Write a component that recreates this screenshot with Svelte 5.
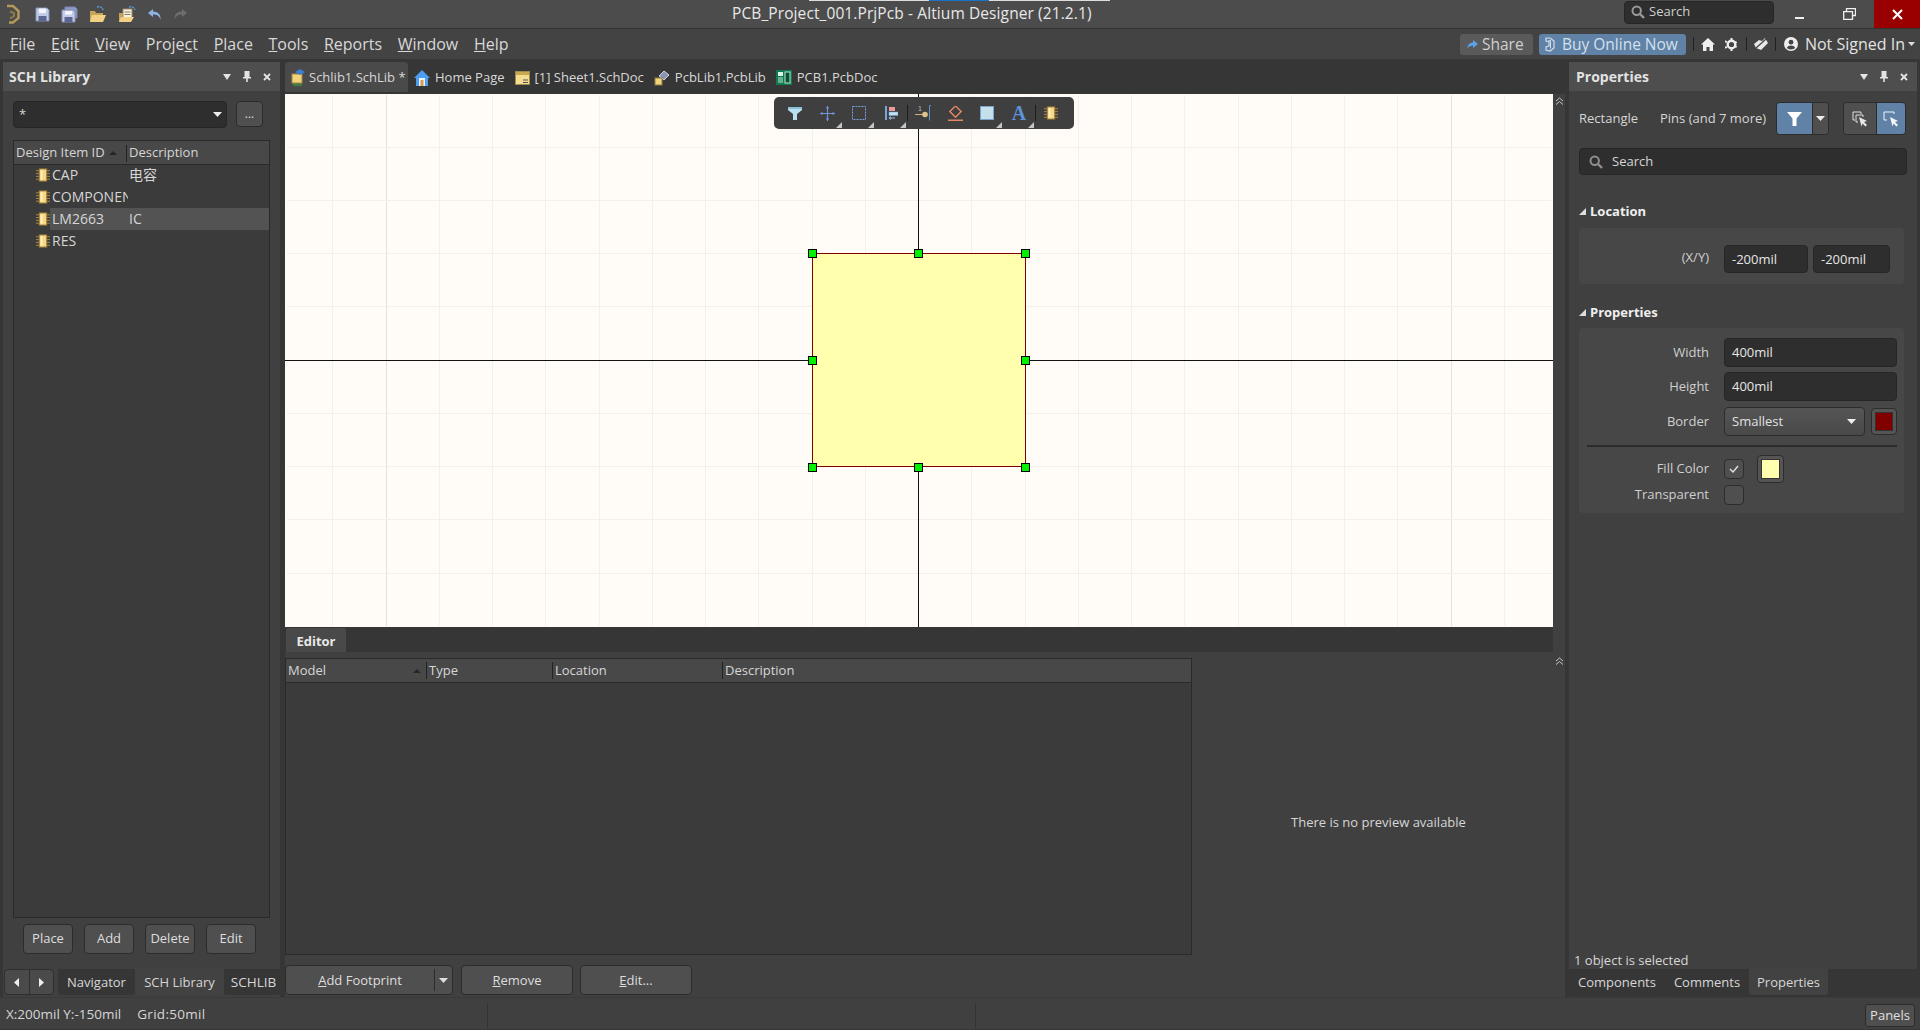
<script>
  const menu = [['','F','ile'],['','E','dit'],['','V','iew'],['Proje','c','t'],['','P','lace'],['','T','ools'],['','R','eports'],['','W','indow'],['','H','elp']];
  const rows = [['CAP','电容',false],['COMPONENT_1','',false],['LM2663','IC',true],['RES','',false]];
  const gx = []; for (let k=-11;k<=11;k++){ if(k!==0) gx.push({x:Math.floor(918.5+53.25*k)+0.5,major:Math.abs(k)===10}); }
  const gy = []; for (let k=-4;k<=4;k++){ if(k!==0) gy.push(Math.floor(360+53.25*k)+0.5); }
  const handles = [[812,253],[918,253],[1025,253],[812,360],[1025,360],[812,467],[918,467],[1025,467]];
</script>

{#snippet chip(s=15)}
  <svg class="ico" width={s} height={s} viewBox="0 0 15 15"><path d="M0 3h15M0 6h15M0 9h15M0 12h15" stroke="#b08d3c" stroke-width="1"/><rect x="3.5" y="1" width="8" height="13" fill="#f8d686" stroke="#9a7a33"/><rect x="5" y="2.5" width="2" height="10" fill="#fdf0c4"/></svg>
{/snippet}
{#snippet mag(s=14,c='#9a9a9a')}
  <svg class="ico" width={s} height={s} viewBox="0 0 14 14"><circle cx="5.7" cy="5.7" r="4.2" fill="none" stroke={c} stroke-width="2"/><path d="M9 9l4 4" stroke={c} stroke-width="2.4"/></svg>
{/snippet}
{#snippet caret(c='#e6e6e6',w=9)}
  <svg class="ico" width={w} height={w*5/9} viewBox="0 0 9 5"><path d="M0 0h9L4.500 5z" fill={c}/></svg>
{/snippet}
{#snippet panelhead(title)}
  <div class="phead">
    <span class="ptitle">{title}</span>
    <span class="pctl">
      <svg class="ico" width="8" height="6" viewBox="0 0 8 6"><path d="M0 0h8L4 6z" fill="#e4e4e4"/></svg>
      <svg class="ico" width="8" height="11" viewBox="0 0 8 11"><path d="M1.500 0h5v6H8v1.500H4.800V11H3.200V7.500H0V6h1.500z" fill="#e4e4e4"/></svg>
      <svg class="ico" width="8" height="8" viewBox="0 0 8 8"><path d="M1 1l6 6M7 1L1 7" stroke="#e4e4e4" stroke-width="1.800"/></svg>
    </span>
  </div>
{/snippet}

<div class="topline"><i class="a"></i><i class="b"></i><i class="a2"></i></div>
<div class="app">
  <header class="titlebar">
    <div class="qa">
      <svg class="logo" width="14" height="20" viewBox="0 0 14 20"><path d="M1 2h6l5.500 5v7L7 18.500H3" fill="none" stroke="#b5995a" stroke-width="2.400"/><path d="M4 7.500l4 1.500v3l-4 2.500" fill="none" stroke="#8f7a48" stroke-width="2"/></svg>
      <svg class="q" width="15" height="15" viewBox="0 0 15 15"><path d="M1 1h11l2 2v11H1z" fill="#c2cbe8" stroke="#8490bc"/><rect x="4" y="1.500" width="7" height="4.500" fill="#f3f5fb"/><rect x="3.500" y="9" width="8" height="5" fill="#5d6690"/></svg>
      <svg class="q" width="17" height="17" viewBox="0 0 17 17"><path d="M4 1h10l2 2v9H4z" fill="#8e99c4" stroke="#7a86b4"/><path d="M1 4h11l2 2v10H1z" fill="#c2cbe8" stroke="#8490bc"/><rect x="4" y="5" width="7" height="3.500" fill="#f3f5fb"/><rect x="3.500" y="11" width="8" height="5" fill="#5d6690"/></svg>
      <svg class="q" width="18" height="17" viewBox="0 0 18 17"><path d="M1 5h5l1 2h7v9H1z" fill="#c8a458"/><path d="M3 9h14l-3 7H1z" fill="#f2d184"/><path d="M8 1c3-1 5 0 6 3" stroke="#5b9bd5" fill="none" stroke-width="1.400" stroke-dasharray="2 1"/></svg>
      <svg class="q" width="18" height="17" viewBox="0 0 18 17"><path d="M1 7h4l1 1h7v8H1z" fill="#c8a458"/><rect x="5" y="3" width="9" height="9" fill="#f7f3e6" stroke="#9a8a60"/><path d="M6.500 6h6M6.500 8.500h6" stroke="#8a7a50"/><path d="M3 11h13l-3 5H1z" fill="#f2d184"/><path d="M11 1c3-.5 5 0 6 3" stroke="#5b9bd5" fill="none" stroke-width="1.400" stroke-dasharray="2 1"/></svg>
      <svg class="q" width="15" height="13" viewBox="0 0 15 13"><path d="M6 1L1 5l5 4V6.500c4 0 6 1 7.500 5 .5-5-2.500-8-7.500-8z" fill="#8fb2e0"/></svg>
      <svg class="q" width="15" height="13" viewBox="0 0 15 13"><path d="M9 1l5 4-5 4V6.500c-4 0-6 1-7.500 5C1 6.500 4 3.500 9 3.500z" fill="#6e6e6e"/></svg>
    </div>
    <div class="title">PCB_Project_001.PrjPcb - Altium Designer (21.2.1)</div>
    <div class="grow"></div>
    <div class="tsearch">{@render mag(14)}<span>Search</span></div>
    <div class="win">
      <span class="wb"><svg width="9" height="9" viewBox="0 0 9 9"><rect y="7" width="9" height="2" fill="#f0f0f0"/></svg></span>
      <span class="wb"><svg width="13" height="12" viewBox="0 0 13 12"><path d="M3.500 3V.7h9v6.800h-3M.7 3.700h8.800v7.600H.7z" fill="none" stroke="#f0f0f0" stroke-width="1.300"/></svg></span>
      <span class="wb close"><svg width="11" height="11" viewBox="0 0 11 11"><path d="M1 1l9 9M10 1l-9 9" stroke="#fff" stroke-width="2"/></svg></span>
    </div>
  </header>

  <nav class="menubar">
    {#each menu as m}<span class="mi">{m[0]}<u>{m[1]}</u>{m[2]}</span>{/each}
    <div class="grow"></div>
    <span class="share"><svg class="ico" width="11" height="9" viewBox="0 0 11 9"><path d="M6 0l5 4-5 4V5.500C3.500 5.500 1.500 6.500 0 8.500 .5 5 2.500 2.800 6 2.500z" fill="#5ea3e6"/></svg>Share</span>
    <span class="buy"><svg class="ico" width="10" height="15" viewBox="0 0 10 15"><path d="M1 1h4l4 3v7l-4 3-4-1V10l3-1V5L1 4z" fill="none" stroke="#d4dfeb" stroke-width="1.200"/><path d="M3.500 3.500h2v8" fill="none" stroke="#d4dfeb"/></svg>Buy Online Now</span>
    <i class="vd first"></i>
    <svg class="ico home" width="14" height="13" viewBox="0 0 14 13"><path d="M7 0l7 6.500h-2V13H8.500V9h-3v4H2V6.500H0z" fill="#eee"/></svg>
    <svg class="ico gear" width="13" height="13" viewBox="0 0 13 13"><circle cx="6.500" cy="6.500" r="3.800" fill="none" stroke="#eee" stroke-width="2.400"/><path d="M6.500 0v13M0 3.200l13 6.600M0 9.800l13-6.600" stroke="#eee" stroke-width="2" stroke-dasharray="2 9"/></svg>
    <i class="vd"></i>
    <svg class="ico hand" width="14" height="12" viewBox="0 0 14 12"><path d="M0 6l5-4 3 1 3-3 3 5-7 7-5-2z" fill="#e8e8e8"/><path d="M2 10L12 1" stroke="#434343" stroke-width="1.200"/></svg>
    <i class="vd"></i>
    <svg class="ico user" width="14" height="14" viewBox="0 0 14 14"><circle cx="7" cy="7" r="7" fill="#eee"/><circle cx="7" cy="5.200" r="2.400" fill="#434343"/><path d="M2.800 11c1-2 2.500-2.600 4.200-2.600S10.200 9 11.200 11c-2.200 1.900-6.200 1.900-8.400 0z" fill="#434343"/></svg>
    <span class="signed">Not Signed In</span>{@render caret('#ddd',7)}
    <span class="endgap"></span>
  </nav>

  <main class="work">
    <section class="panel left">
      {@render panelhead('SCH Library')}
      <div class="filter">
        <div class="combo"><span>*</span>{@render caret('#eee')}</div>
        <button class="btn dots">...</button>
      </div>
      <div class="libtable">
        <div class="thead">
          <span class="c1">Design Item ID<svg class="sort" width="8" height="4" viewBox="0 0 8 4"><path d="M4 0l4 4H0z" fill="#262626"/></svg></span>
          <span class="c2">Description</span>
        </div>
        {#each rows as r}
          <div class="trow">
            <span class="chipcell">{@render chip(14)}</span>
            <span class="rowbody" class:sel={r[2]}><span class="name">{r[0]}</span><span class="desc">{r[1]}</span></span>
          </div>
        {/each}
      </div>
      <div class="btnrow">
        <button class="btn lb">Place</button><button class="btn lb">Add</button><button class="btn lb">Delete</button><button class="btn lb">Edit</button>
      </div>
      <div class="ltabs">
        <div class="arrows">
          <span><svg width="5" height="9" viewBox="0 0 5 9"><path d="M5 0v9L0 4.500z" fill="#eee"/></svg></span>
          <span><svg width="5" height="9" viewBox="0 0 5 9"><path d="M0 0v9l5-4.500z" fill="#eee"/></svg></span>
        </div>
        <span class="ltab nav">Navigator</span><span class="ltab on sl">SCH Library</span><span class="ltab sc">SCHLIB</span>
      </div>
    </section>

    <section class="center">
      <div class="doctabs">
        <span class="dt active">
          <svg class="ico" width="15" height="17" viewBox="0 0 15 17"><path d="M3 14h9v3H3z" fill="#3e7d3e"/><rect x="2" y="5" width="10" height="9" fill="#f3d27c" stroke="#a08a40"/><path d="M5 3l5-3 5 3-5 3z" fill="#3b7fd4"/></svg>
          Schlib1.SchLib *
        </span>
        <span class="dt"><svg class="ico" width="16" height="16" viewBox="0 0 16 16"><path d="M8 0l8 8h-2v8H2V8H0z" fill="#4d9df0"/><path d="M5 8h6v8H5z" fill="#eaf3fd"/><path d="M6.500 10h3v6h-3z" fill="#d89c4a"/></svg>Home Page</span>
        <span class="dt"><svg class="ico" width="15" height="14" viewBox="0 0 15 14"><rect x=".5" y=".5" width="14" height="13" fill="#f5dc90" stroke="#a08a50"/><rect x="1" y="1" width="13" height="3" fill="#c9a94f"/><path d="M8 9h5M8 11.500h5" stroke="#555"/></svg>[1] Sheet1.SchDoc</span>
        <span class="dt"><svg class="ico" width="16" height="16" viewBox="0 0 16 16"><path d="M5 6l5-5 5 4-5 5z" fill="#8a94b0" stroke="#cfd5e3"/><rect x="1" y="8" width="7" height="7" fill="#f3d27c" stroke="#8a7a40"/></svg>PcbLib1.PcbLib</span>
        <span class="dt"><svg class="ico" width="16" height="15" viewBox="0 0 16 15"><rect width="16" height="15" fill="#0f7a52"/><rect x="2" y="2" width="5" height="4" fill="#dff3e4"/><rect x="9" y="2" width="5" height="11" fill="#0a4f36" stroke="#bde5cc"/><path d="M2 8h5M2 10h5M2 12h5" stroke="#bde5cc"/></svg>PCB1.PcbDoc</span>
      </div>

      <div class="canvasrow">
        <div class="canvas">
          <svg class="sheet" width="1268" height="533" viewBox="285 94 1268 533">
            {#each gx as g}<line x1={g.x} x2={g.x} y1="95" y2="626" stroke={g.major?'#e2e1dc':'#f1f0eb'} stroke-width="1"/>{/each}
            {#each gy as y}<line x1="287" x2="1551" y1={y} y2={y} stroke="#f1f0eb" stroke-width="1"/>{/each}
            <line x1="918.5" x2="918.5" y1="94" y2="627" stroke="#111"/>
            <line x1="285" x2="1553" y1="360.500" y2="360.500" stroke="#111"/>
            <rect x="812.500" y="253.500" width="213" height="213" fill="#ffffae" stroke="#800000"/>
            {#each handles as h}<rect x={h[0]-3.5} y={h[1]-3.5} width="8" height="8" fill="#00f000" stroke="#000"/>{/each}
          </svg>
          <div class="toolbar">
            <span class="tc"><svg width="14" height="13" viewBox="0 0 14 13"><path d="M0 0h14v3L9 7v6H5V7L0 3z" fill="#b9e0ee"/><path d="M0 0h14v2H0z" fill="#8cc0d6"/></svg></span>
            <span class="tc more"><svg width="15" height="15" viewBox="0 0 15 15"><path d="M7.500 0v15M0 7.500h15" stroke="#6f93d6" stroke-width="1.200"/><path d="M6 2h3M6 13h3M2 6v3M13 6v3" stroke="#6f93d6"/></svg></span>
            <span class="tc more"><svg width="14" height="14" viewBox="0 0 14 14"><rect x=".5" y=".5" width="13" height="13" fill="none" stroke="#7d9ee0" stroke-dasharray="2 1"/></svg></span>
            <span class="tc more"><svg width="13" height="14" viewBox="0 0 13 14"><rect width="2" height="14" fill="#7aa6dc"/><rect x="4" y="1" width="6" height="4" fill="#ef9a9a"/><rect x="4" y="6" width="9" height="3.500" fill="#bfe3f2" stroke="#6fa3d0" stroke-width=".5"/><path d="M4 12h6M4 12l2-1.500M4 12l2 1.500" stroke="#9ec1e8"/></svg></span>
            <span class="tc sepl"><svg width="16" height="16" viewBox="0 0 16 16"><text x="3" y="6" class="pn">1</text><path d="M0 9.500h8" stroke="#cbb37a"/><circle cx="10" cy="9.500" r="2.800" fill="#dcc48c"/><path d="M16 .5h-1.500v15" fill="none" stroke="#5d8fd0"/></svg></span>
            <span class="tc"><svg width="15" height="15" viewBox="0 0 15 15"><rect x="3.500" y="1.500" width="8" height="8" transform="rotate(45 7.500 5.500)" fill="none" stroke="#e58a68" stroke-width="1.400"/><rect y="13.500" width="15" height="1.500" fill="#e58a68"/></svg></span>
            <span class="tc more"><svg width="14" height="14" viewBox="0 0 14 14"><rect x=".5" y=".5" width="13" height="13" fill="#c4e0ec" stroke="#7ba3cc"/></svg></span>
            <span class="tc more big">A</span>
            <span class="tc sepl">{@render chip(14)}</span>
          </div>
        </div>
        <div class="strip"><svg width="9" height="8" viewBox="0 0 9 8"><path d="M1 4l3.500-3L8 4M1 7.500l3.500-3 3.500 3" fill="none" stroke="#c9c9c9"/></svg></div>
      </div>

      <div class="editorband">
        <div class="bandfill"><span class="edtab">Editor</span></div>
        <div class="strip"></div>
      </div>

      <div class="editorbody">
        <div class="edleft">
          <div class="edtable">
            <div class="ehead">
              <span class="e1">Model<svg class="sort" width="8" height="4" viewBox="0 0 8 4"><path d="M4 0l4 4H0z" fill="#262626"/></svg></span>
              <span class="e2">Type</span><span class="e3">Location</span><span class="e4">Description</span>
            </div>
          </div>
          <div class="edbtns">
            <div class="btn addfp"><span class="lbl"><u>A</u>dd Footprint</span><span class="drop">{@render caret('#ddd')}</span></div>
            <button class="btn eb remove"><u>R</u>emove</button>
            <button class="btn eb"><u>E</u>dit...</button>
          </div>
        </div>
        <div class="preview">There is no preview available</div>
        <div class="strip2"><svg width="9" height="8" viewBox="0 0 9 8"><path d="M1 4l3.500-3L8 4M1 7.500l3.500-3 3.500 3" fill="none" stroke="#c9c9c9"/></svg></div>
      </div>
    </section>

    <section class="panel right">
      {@render panelhead('Properties')}
      <div class="pbody">
        <div class="selrow">
          <span class="rect">Rectangle</span><span class="pins">Pins (and 7 more)</span>
          <div class="fgroup">
            <span class="fb blue"><svg width="15" height="14" viewBox="0 0 15 14"><path d="M0 0h15L9.500 6.500V14h-4V6.500z" fill="#fff"/></svg></span>
            <span class="fb dd">{@render caret('#eee')}</span>
          </div>
          <div class="fgroup two">
            <span class="fb g"><svg width="16" height="16" viewBox="0 0 16 16"><path d="M1 1h8v2M1 1v8h2M4 4h7v2M4 4v7h2" fill="none" stroke="#e0e0e0"/><path d="M7 6l8 4-3 1 3 3-1.500 1.500-3-3-1 3z" fill="#e8e8e8"/></svg></span>
            <span class="fb blue g"><svg width="16" height="16" viewBox="0 0 16 16"><path d="M1 9V1h10v2M1 9h3" fill="none" stroke="#f2f6fb"/><path d="M7 6l8 4-3 1 3 3-1.500 1.500-3-3-1 3z" fill="#f2f6fb"/></svg></span>
          </div>
        </div>
        <div class="psearch">{@render mag(14,'#8f8f8f')}<span>Search</span></div>

        <h3 class="sec first"><svg width="7" height="7" viewBox="0 0 7 7"><path d="M7 0v7H0z" fill="#ddd"/></svg>Location</h3>
        <div class="box loc">
          <span class="lab xy">(X/Y)</span><span class="inp x">-200mil</span><span class="inp y">-200mil</span>
        </div>

        <h3 class="sec"><svg width="7" height="7" viewBox="0 0 7 7"><path d="M7 0v7H0z" fill="#ddd"/></svg>Properties</h3>
        <div class="box props">
          <div class="frow"><span class="lab">Width</span><span class="inp wide">400mil</span></div>
          <div class="frow"><span class="lab">Height</span><span class="inp wide">400mil</span></div>
          <div class="frow bd"><span class="lab">Border</span><span class="sel2"><span>Smallest</span>{@render caret('#f0f0f0')}</span><span class="sw red"><i></i></span></div>
          <div class="hr"></div>
          <div class="frow fill"><span class="lab">Fill Color</span><span class="chk"><svg width="10" height="8" viewBox="0 0 10 8"><path d="M1 4l3 3 5-6" fill="none" stroke="#e6e6e6" stroke-width="1.300"/></svg></span><span class="sw yel"><i></i></span></div>
          <div class="frow trans"><span class="lab">Transparent</span><span class="chk"></span></div>
        </div>

        <div class="grow"></div>
        <div class="selinfo">1 object is selected</div>
      </div>
      <div class="rtabs"><span class="rt c">Components</span><span class="rt m">Comments</span><span class="rt on p">Properties</span></div>
    </section>
  </main>

  <footer class="status">
    <span class="coord">X:200mil Y:-150mil</span><span class="gridt">Grid:50mil</span>
    <i class="sd one"></i><i class="sd two"></i>
    <div class="grow"></div>
    <span class="panelsbtn">Panels</span>
  </footer>
</div>

<style>
  :global(body){margin:0;background:#363636;}
  .app{position:relative;width:1920px;height:1030px;display:flex;flex-direction:column;overflow:hidden;background:#363636;color:#d6d6d6;font:13px/1.2 "Open Sans","Noto Sans CJK SC",sans-serif;}
  .topline{position:absolute;left:809px;top:0;width:301px;height:1px;z-index:3;display:flex;}
  .topline i{display:block;height:1px;}
  .topline .a{width:120px;background:#ddd}.topline .b{width:60px;background:#1a73c8}.topline .a2{width:121px;background:#ddd}
  .grow{flex:1;}
  .ico{display:block;flex:none;}
  button{font:inherit;color:inherit;padding:0;}
  .titlebar{height:28px;flex:none;display:flex;align-items:center;background:#4c4c4c;border-bottom:1px solid #333;}
  .qa{width:732px;height:28px;display:flex;align-items:center;flex:none;position:relative;}
  .logo{margin-left:6px;margin-right:15px;}
  .q{margin-right:11px;flex:none;}
  .title{font-size:15.500px;color:#e8e8e8;letter-spacing:.1px;margin-top:-2px;}
  .tsearch{width:150px;height:23px;box-sizing:border-box;background:#2e2e2e;border:1px solid #262626;border-radius:4px;margin-top:-4px;display:flex;align-items:center;gap:4px;padding-left:6px;color:#cfcfcf;}
  .win{display:flex;height:28px;margin-left:0;}
  .wb{width:50px;display:flex;align-items:center;justify-content:center;}
  .close{background:#990000;width:46px;}
  .menubar{height:30px;flex:none;display:flex;align-items:center;background:#434343;padding-left:10px;font-size:16px;color:#d8d8d8;}
  .mi{margin-right:15.700px;padding-top:2px;}
  .share{width:73px;height:21px;box-sizing:border-box;background:#5a5a5a;border-radius:3px;display:flex;align-items:center;gap:4px;padding-left:7px;font-size:15.500px;color:#cfcfcf;}
  .buy{width:147px;height:21px;box-sizing:border-box;margin-left:6px;background:#5f82a6;border-radius:3px;display:flex;align-items:center;gap:7px;padding-left:6px;font-size:15.500px;color:#d5e0ec;white-space:nowrap;}
  .vd{width:1px;height:14px;background:#222;flex:none;display:block;}
  .vd.first{margin-left:7px;}
  .home{margin:0 10px 0 7px;}
  .gear{margin:0 8px 0 0;}
  .hand{margin:0 7px 0 7px;}
  .user{margin:0 7px 0 8px;}
  .signed{font-size:16px;color:#e2e2e2;margin-right:3px;padding-top:1px;}
  .endgap{width:5px;}
  .work{height:938px;flex:none;display:flex;padding-top:3px;box-sizing:border-box;}
  .panel{background:#404040;display:flex;flex-direction:column;flex:none;}
  .panel.left{width:277px;margin-left:3px;margin-right:5px;}
  .panel.right{width:348px;margin-left:4px;}
  .phead{height:29px;flex:none;background:#4e4e4e;display:flex;align-items:center;justify-content:space-between;padding:0 9px 0 6px;}
  .ptitle{font-size:14px;font-weight:700;color:#e2e2e2;padding-top:1px;}
  .pctl{display:flex;align-items:center;gap:12px;}
  .right .phead{padding-left:7px;}
  .filter{display:flex;padding:10px 0 0 10px;gap:9px;height:27px;}
  .combo{width:214px;height:27px;box-sizing:border-box;background:#2e2e2e;border:1px solid #262626;border-radius:4px;display:flex;align-items:center;justify-content:space-between;padding:0 4px 0 5px;}
  .btn{background:#4f4f4f;border:1px solid #2c2c2c;border-radius:4px;box-sizing:border-box;color:#dedede;}
  .dots{width:27px;height:26px;font-size:12px;}
  .libtable{margin:12px 10px 0 10px;width:257px;box-sizing:border-box;flex:1;border:1px solid #2a2a2a;background:#3b3b3b;}
  .thead{height:22px;background:#484848;display:flex;align-items:center;border-bottom:1px solid #2a2a2a;padding-top:1px;box-sizing:content-box;margin-bottom:-1px;}
  .c1{width:113px;padding-left:2px;box-sizing:border-box;display:flex;align-items:center;gap:4px;border-right:1px solid #222;height:17px;white-space:nowrap;}
  .c2{padding-left:2px;}
  .sort{flex:none;}
  .trow{height:22px;display:flex;align-items:center;font-size:14px;}
  .chipcell{width:36px;padding-left:22px;box-sizing:border-box;flex:none;}
  .rowbody{flex:1;display:flex;height:22px;align-items:center;padding-left:2px;}
  .rowbody.sel{background:#535353;}
  .name{width:76px;height:22px;line-height:22px;overflow:hidden;white-space:nowrap;flex:none;}
  .desc{padding-left:1px;}
  .btnrow{display:flex;gap:11px;padding:6px 0 0 20px;height:30px;margin-bottom:15px;}
  .lb{width:50px;height:30px;}
  .ltabs{height:26px;display:flex;margin-bottom:2px;margin-left:1px;}
  .arrows{width:50px;height:26px;box-sizing:border-box;background:#4a4a4a;border:1px solid #2f2f2f;border-radius:4px;display:flex;margin-right:4px;flex:none;}
  .arrows span{flex:1;display:flex;align-items:center;justify-content:center;}
  .arrows span+span{border-left:1px solid #2f2f2f;}
  .ltab{height:26px;display:flex;align-items:center;justify-content:center;box-sizing:border-box;background:#363636;flex:none;border-radius:0 0 3px 3px;padding-top:1px;white-space:nowrap;}
  .ltab.on{background:#424242;}
  .nav{width:77px;}.sl{width:89px;}.sc{width:56px;font-size:13.500px;padding-left:3px;}
  .center{width:1280px;flex:none;display:flex;flex-direction:column;}
  .doctabs{height:32px;flex:none;display:flex;align-items:flex-start;gap:10px;font-size:13px;}
  .dt{height:30px;display:flex;align-items:center;gap:5px;color:#d8d8d8;white-space:nowrap;padding-top:1px;box-sizing:border-box;}
  .dt.active{width:123px;padding-left:5px;gap:4px;background:#4a4a4a;border-radius:4px 4px 0 0;margin-right:-4px;}
  .canvasrow{height:533px;flex:none;display:flex;}
  .canvas{position:relative;width:1268px;height:533px;background:#fffcf7;flex:none;}
  .sheet{display:block;}
  .strip{width:12px;flex:none;background:#404040;display:flex;justify-content:center;padding-top:3px;box-sizing:border-box;}
  .strip2{width:12px;margin-left:-12px;flex:none;display:flex;justify-content:center;padding-top:5px;box-sizing:border-box;}
  .toolbar{position:absolute;left:489px;top:3px;width:300px;height:32px;box-sizing:border-box;padding-left:5px;background:#3f3f3f;border-radius:5px;display:flex;align-items:center;}
  .tc{position:relative;width:32px;height:32px;box-sizing:border-box;display:flex;align-items:center;justify-content:center;flex:none;}
  .tc.more::after{content:"";position:absolute;right:1px;bottom:1px;border-style:solid;border-width:0 0 6px 6px;border-color:transparent transparent #c4c4c4 transparent;}
  .tc.sepl::before{content:"";position:absolute;left:0;top:8px;height:16px;border-left:1px solid #1c1c1c;}
  .pn{font:7px "Liberation Sans",sans-serif;fill:#bbb;}
  .big{font:700 20px "Liberation Serif",serif;color:#5d93d8;}
  .editorband{height:25px;flex:none;display:flex;}
  .bandfill{width:1268px;background:#363636;flex:none;}
  .edtab{display:flex;width:60px;height:24px;box-sizing:border-box;padding-top:3px;margin:1px 0 0 1px;background:#494949;align-items:center;justify-content:center;font-weight:700;color:#e8e8e8;border-radius:2px 2px 0 0;}
  .editorbody{flex:1;display:flex;background:#404040;padding-bottom:2px;box-sizing:border-box;}
  .edleft{width:907px;flex:none;display:flex;flex-direction:column;}
  .edtable{height:297px;margin-top:6px;flex:none;box-sizing:border-box;border:1px solid #2a2a2a;background:#3b3b3b;}
  .ehead{height:23px;background:#484848;border-bottom:1px solid #2a2a2a;display:flex;align-items:center;box-sizing:content-box;}
  .ehead span{height:17px;display:flex;align-items:center;box-sizing:border-box;padding-left:2px;border-right:1px solid #222;}
  .e1{width:141px;justify-content:space-between;padding-right:5px;}
  .e2{width:126px;}.e3{width:170px;}
  .ehead .e4{border:0;}
  .edbtns{display:flex;margin-top:10px;gap:8px;}
  .addfp{width:168px;height:30px;display:flex;align-items:center;}
  .addfp .lbl{width:148px;text-align:center;padding-top:1px;}
  .addfp .drop{flex:1;height:22px;border-left:1px solid #2c2c2c;display:flex;align-items:center;justify-content:center;}
  .eb{width:112px;height:30px;padding-top:2px;}
  .remove{margin-right:-1px;}
  .preview{flex:1;display:flex;align-items:center;justify-content:center;color:#d6d6d6;padding-bottom:2px;}
  .pbody{flex:1;display:flex;flex-direction:column;padding:0 10px;min-height:0;}
  .selrow{display:flex;align-items:center;height:33px;margin-top:11px;}
  .rect{width:81px;}.pins{width:116px;white-space:nowrap;}
  .fgroup{display:flex;height:33px;width:53px;box-sizing:border-box;border:1px solid #2c2c2c;border-radius:4px;overflow:hidden;flex:none;}
  .fgroup.two{width:63px;margin-left:14px;}
  .fb{display:flex;align-items:center;justify-content:center;background:#4f4f4f;}
  .fb.blue{background:#5f82a6;width:35px;}
  .fb.dd{flex:1;border-left:1px solid #2c2c2c;}
  .fb.g{width:32px;}
  .fb.blue.g{flex:1;border-left:1px solid #2c2c2c;}
  .psearch{height:27px;margin-top:13px;flex:none;width:328px;box-sizing:border-box;background:#2e2e2e;border:1px solid #262626;border-radius:4px;display:flex;align-items:center;gap:9px;padding-left:9px;}
  .sec{margin:0;font-size:13px;font-weight:700;color:#efefef;display:flex;align-items:center;gap:4px;height:18px;box-sizing:border-box;margin-top:19px;padding-top:1px;}
  .sec.first{margin-top:27px;}
  .box{background:#474747;border-radius:4px;width:325px;box-sizing:border-box;flex:none;margin-top:7px;}
  .box.loc{height:56px;display:flex;align-items:center;padding-top:6px;margin-top:8px;}
  .lab{width:130px;text-align:right;flex:none;color:#cfcfcf;white-space:nowrap;}
  .lab.xy{margin-top:-4px;padding-top:1px;}
  .inp{height:29px;box-sizing:border-box;background:#2e2e2e;border:1px solid #262626;border-radius:4px;display:flex;align-items:center;padding:1px 0 0 7px;color:#e6e6e6;flex:none;}
  .inp.x{width:84px;margin-left:15px;height:28px;}.inp.y{width:77px;margin-left:5px;height:28px;}
  .inp.wide{width:173px;margin-left:15px;}
  .box.props{height:185px;padding-top:10px;}
  .frow{display:flex;align-items:center;height:29px;margin-bottom:5px;}
  .frow.bd{margin-top:6px;}
  .sel2{width:141px;height:29px;margin-left:15px;box-sizing:border-box;background:linear-gradient(#555,#494949);border:1px solid #2c2c2c;border-radius:4px;display:flex;align-items:center;justify-content:space-between;padding:0 8px 0 7px;flex:none;color:#e0e0e0;}
  .sw{box-sizing:border-box;border:1px solid #2c2c2c;border-radius:4px;background:#555;display:flex;padding:3px;flex:none;}
  .sw i{display:block;flex:1;border:1px solid #333;}
  .sw.red{width:26px;height:27px;margin-left:6px;}
  .sw.red i{background:#800000;}
  .sw.yel{width:27px;height:28px;margin-left:13px;}
  .sw.yel i{background:#ffffae;}
  .hr{height:2px;background:#2c2c2c;margin:9px 7px 0 8px;}
  .frow.fill{height:28px;margin-top:8px;margin-bottom:0;}
  .frow.trans{height:20px;margin-top:2px;margin-bottom:0;}
  .chk{width:20px;height:20px;margin-left:15px;box-sizing:border-box;background:#4f4f4f;border:1px solid #2c2c2c;border-radius:4px;display:flex;align-items:center;justify-content:center;flex:none;}
  .selinfo{margin-left:-5px;height:18px;line-height:18px;font-size:13px;}
  .rtabs{height:28px;flex:none;display:flex;background:#363636;}
  .rt{height:26px;box-sizing:border-box;display:flex;align-items:center;justify-content:center;background:#363636;border-radius:0 0 3px 3px;padding-top:2px;}
  .rt.on{background:#424242;}
  .rt.c{width:96px;}.rt.m{width:84px;}.rt.p{width:79px;}
  .status{height:32px;flex:none;background:#404040;display:flex;align-items:center;padding-left:6px;position:relative;border-top:1px solid #3a3a3a;box-sizing:border-box;font-size:13.500px;}
  .coord,.gridt{padding-top:2px;}
  .gridt{margin-left:16px;letter-spacing:.3px;}
  .sd{position:absolute;top:5px;height:25px;width:1px;background:#333;}
  .sd.one{left:487px;}.sd.two{left:975px;}
  .panelsbtn{width:50px;height:23px;box-sizing:border-box;margin-right:5px;margin-top:4px;padding-top:1px;background:#4f4f4f;border:1px solid #2c2c2c;border-radius:3px;display:flex;align-items:center;justify-content:center;color:#e0e0e0;font-size:13px;}
</style>
